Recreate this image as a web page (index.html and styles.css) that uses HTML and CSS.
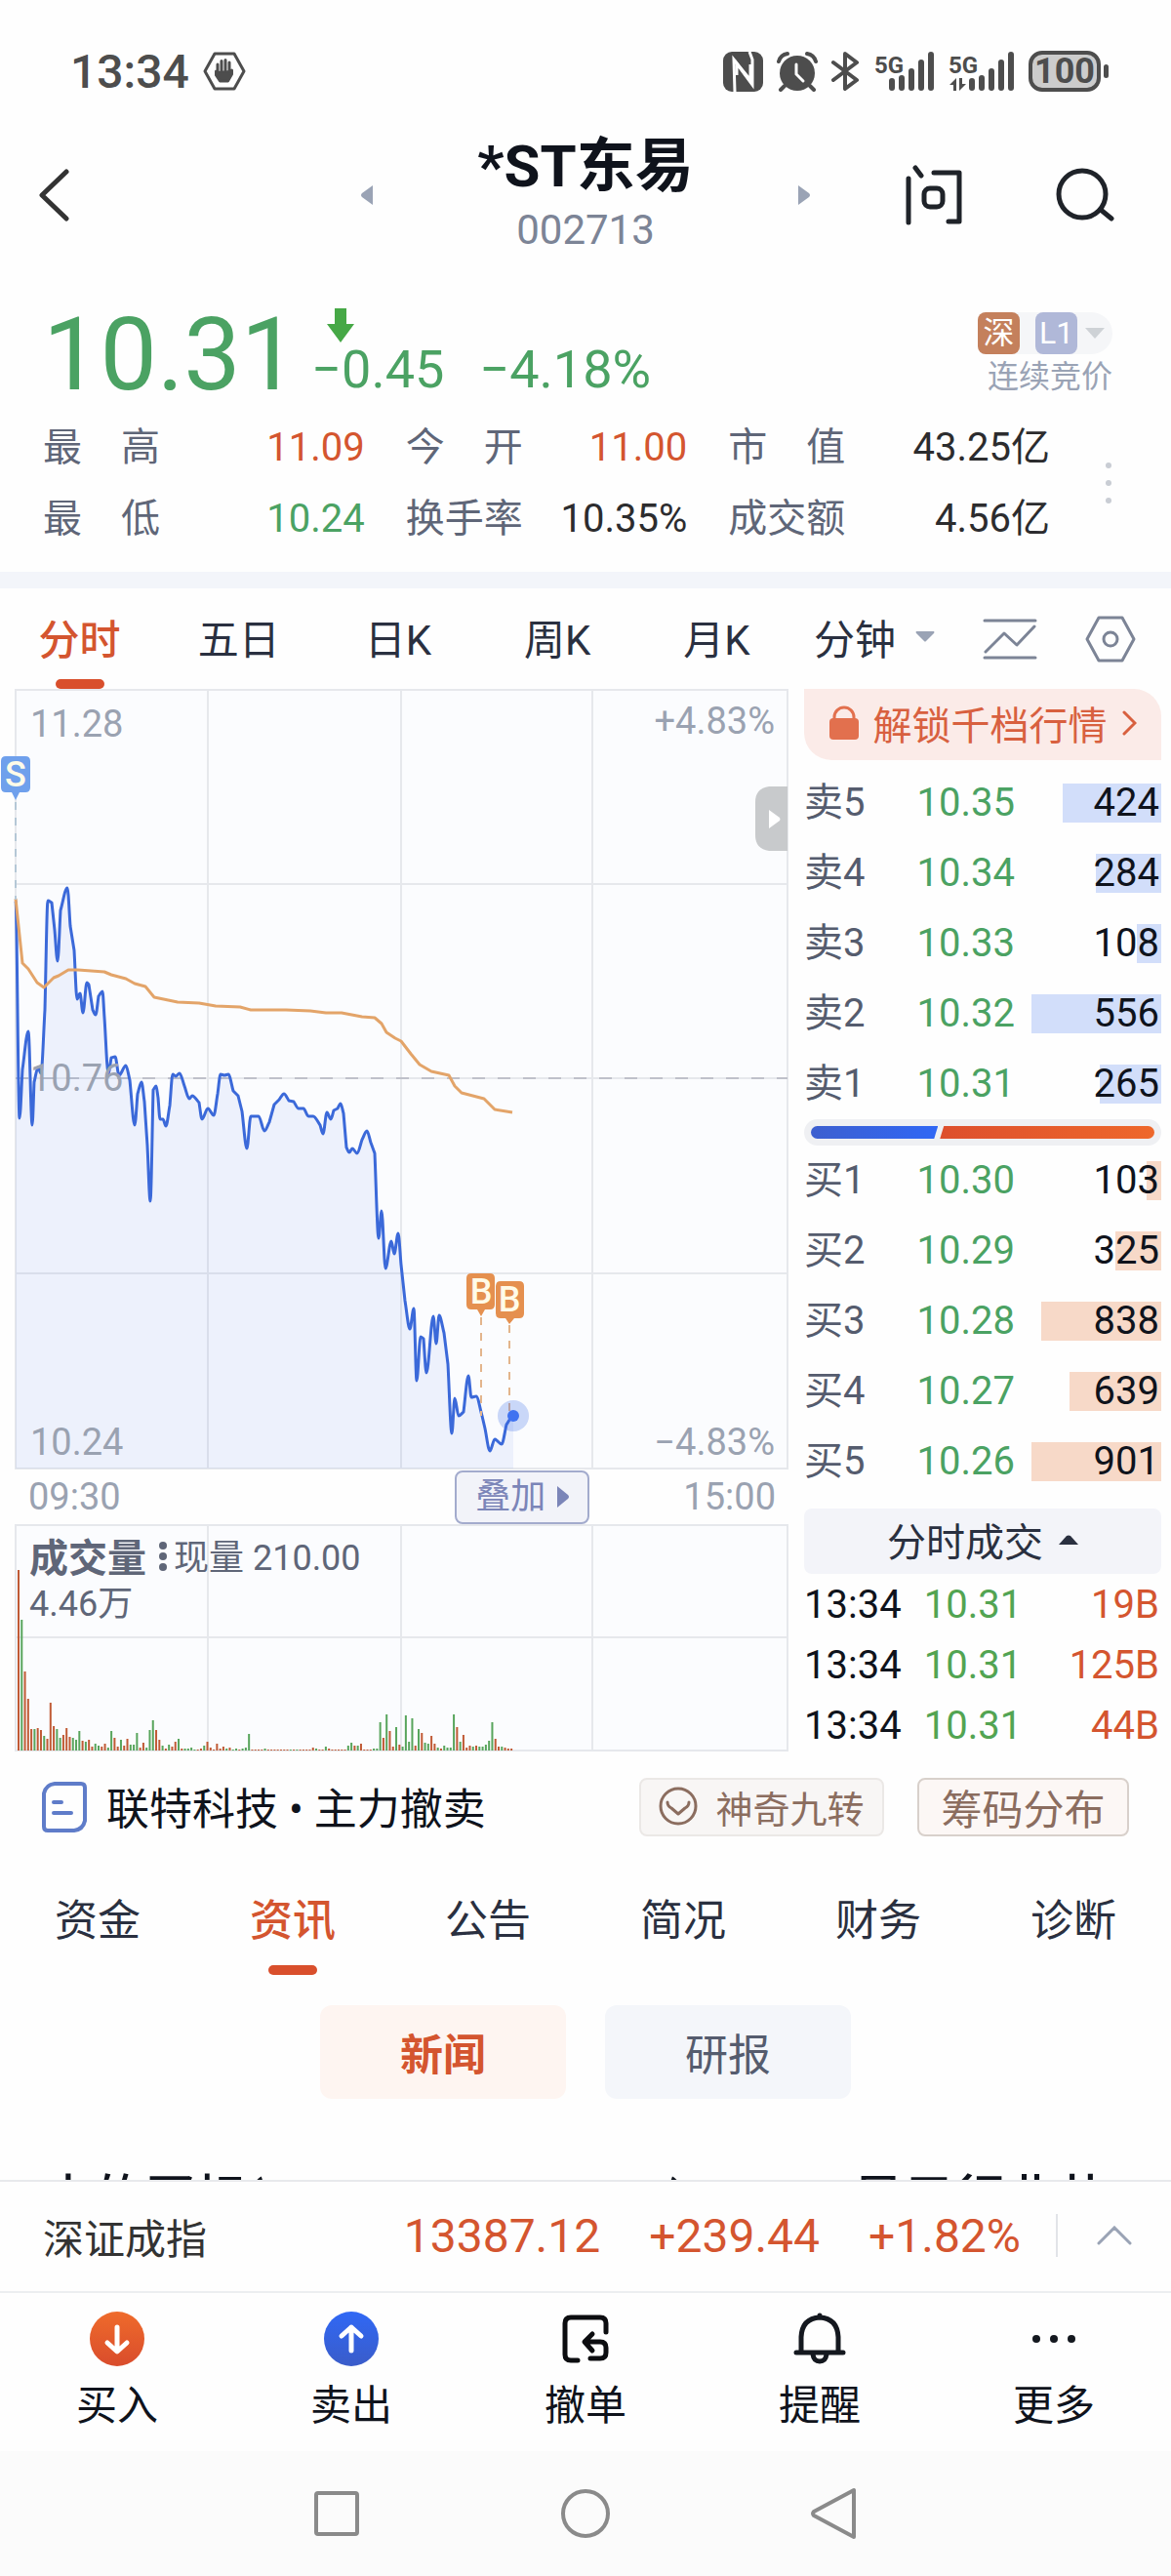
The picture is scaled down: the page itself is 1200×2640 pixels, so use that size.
FILE: index.html
```html
<!DOCTYPE html>
<html lang="zh-CN">

<head>
  <meta charset="utf-8">
  <title>*ST东易 002713</title>
  <link rel="stylesheet" href="styles.css">
</head>

<body>
  <div class="status">
    <div class="status-left">
      <span class="clock">13:34</span>
      <svg width="44" height="40" viewBox="0 0 44 40">
        <path d="M12 2h20l10 18-10 18H12L2 20z" fill="none" stroke="#4d4d4d" stroke-width="3" stroke-linejoin="round"/>
        <path d="M15 22V13M19 20V9.500M23 20V8.500M27 20V11M13.500 20v4l4 6h8l4-7v-4" fill="#4d4d4d" stroke="#4d4d4d" stroke-width="3" stroke-linecap="round" stroke-linejoin="round"/>
      </svg>
    </div>
    <div class="status-right">
      <svg width="41" height="41" viewBox="0 0 41 41">
        <rect width="41" height="41" rx="9" fill="#4d4d4d"/>
        <path d="M12 41L11 8l17 21V13" fill="none" stroke="#fff" stroke-width="3"/>
        <path d="M14 24V12l16 22V8L27 0" fill="none" stroke="#fff" stroke-width="3"/>
      </svg>
      <svg width="42" height="42" viewBox="0 0 42 42">
        <circle cx="21" cy="23" r="18" fill="#4d4d4d"/>
        <path d="M2 11Q4 4 11 3M31 3q7 1 9 8M8 36l-4 4M34 36l4 4" fill="none" stroke="#4d4d4d" stroke-width="4" stroke-linecap="round"/>
        <path d="M20 14v10l7 7" fill="none" stroke="#fff" stroke-width="3" stroke-linecap="round"/>
      </svg>
      <svg width="30" height="42" viewBox="0 0 30 42">
        <path d="M2 12l24 18-12 9V3l12 9L2 30" fill="none" stroke="#4d4d4d" stroke-width="4" stroke-linecap="round" stroke-linejoin="round"/>
      </svg>
      <svg width="62" height="42" viewBox="0 0 62 42">
        <text class="net" x="0" y="23">5G</text>
        <path d="M18 31v7M28 28v10M38 21v17M48 12v26M58 4v34" stroke="#4d4d4d" stroke-width="6" stroke-linecap="round"/>
      </svg>
      <svg width="68" height="42" viewBox="0 0 68 42">
        <text class="net" x="0" y="23">5G</text>
        <path d="M24 31v7M34 28v10M44 21v17M54 12v26M64 4v34" stroke="#4d4d4d" stroke-width="6" stroke-linecap="round"/>
        <path d="M1 35l7-7v13H5v-6zM18 34l-7 7V28h3v6z" fill="#4d4d4d"/>
      </svg>
      <span class="battery">100</span>
    </div>
  </div>

  <div class="header">
    <button class="back" aria-label="返回">
      <svg width="32" height="56" viewBox="0 0 32 56">
        <path d="M28 4L3 28l25 24" fill="none" stroke="#333" stroke-width="5" stroke-linecap="round" stroke-linejoin="round"/>
      </svg>
    </button>
    <div class="switcher">
      <button aria-label="上一只"><svg width="12" height="20"><path d="M12 0v20L1 12q-2-2 0-4z" fill="#9aa3b5"/></svg></button>
      <div class="stock">
        <h1>*ST东易</h1>
        <div class="code">002713</div>
      </div>
      <button aria-label="下一只"><svg width="12" height="20"><path d="M0 0v20l11-8q2-2 0-4z" fill="#9aa3b5"/></svg></button>
    </div>
    <div class="header-right">
      <button aria-label="问">
        <svg width="58" height="62" viewBox="0 0 58 62">
          <path d="M3 14v45M10 3l6 8M29 8h26v50H44" fill="none" stroke="#1f2329" stroke-width="5" stroke-linecap="round" stroke-linejoin="round"/>
          <rect x="19" y="24" width="19" height="19" rx="6" fill="none" stroke="#1f2329" stroke-width="5"/>
        </svg>
      </button>
      <button aria-label="搜索">
        <svg width="60" height="56" viewBox="0 0 60 56">
          <circle cx="27" cy="27" r="24" fill="none" stroke="#1f2329" stroke-width="5"/>
          <path d="M46 43l11 9" stroke="#1f2329" stroke-width="5" stroke-linecap="round"/>
        </svg>
      </button>
    </div>
  </div>

  <div class="quote">
    <div class="price-row">
      <div class="price">10.31</div>
      <div class="change">
        <svg width="28" height="36"><path d="M8 0h12v16h8L14 35 0 16h8z" fill="#46a846"/></svg>
        <div><span>−0.45</span><span>−4.18%</span></div>
      </div>
      <div class="market">
        <button class="badges"><span class="badge sz">深</span><span class="badge l1">L1</span><svg width="20" height="12"><path d="M0 0h20L10 11z" fill="#ced2d6"/></svg></button>
        <div>连续竞价</div>
      </div>
    </div>
    <div class="stats-row">
      <dl class="stats">
        <div><dt>最　高</dt><dd class="up">11.09</dd></div>
        <div><dt>今　开</dt><dd class="up">11.00</dd></div>
        <div><dt>市　值</dt><dd>43.25亿</dd></div>
        <div><dt>最　低</dt><dd class="down">10.24</dd></div>
        <div><dt>换手率</dt><dd>10.35%</dd></div>
        <div><dt>成交额</dt><dd>4.56亿</dd></div>
      </dl>
      <button aria-label="更多指标">
        <svg width="8" height="44" fill="#c9cdd4"><circle cx="4" cy="4" r="3"/><circle cx="4" cy="22" r="3"/><circle cx="4" cy="40" r="3"/></svg>
      </button>
    </div>
  </div>

  <div class="periods">
    <div class="period-tabs">
      <button class="active">分时</button>
      <button>五日</button>
      <button>日K</button>
      <button>周K</button>
      <button>月K</button>
    </div>
    <div class="period-tools">
      <button class="minutes">分钟 <svg width="20" height="11"><path d="M1 0h18q1 1 0 2l-8 8q-1 1-2 0L1 2q-1-1 0-2z" fill="#9aa3b5"/></svg></button>
      <button aria-label="画线">
        <svg width="56" height="44" viewBox="0 0 56 44" fill="none" stroke="#7c8496" stroke-width="3" stroke-linecap="round" stroke-linejoin="round">
          <path d="M2 3h52M2 41h52"/>
          <path d="M3 35l19-19 13 12 18-19"/>
        </svg>
      </button>
      <button aria-label="设置">
        <svg width="52" height="48" viewBox="0 0 52 48" fill="none" stroke="#7c8496" stroke-width="3" stroke-linejoin="round">
          <path d="M14 2h24l12 22-12 22H14L2 24z"/>
          <circle cx="26" cy="24" r="7"/>
        </svg>
      </button>
    </div>
  </div>

  <div class="board">
    <div class="charts">
      <svg class="chart" viewBox="0 0 816 800">
        <rect x="16" y="1" width="791" height="798" fill="#fbfcfe"/>
        <g class="grid">
          <path d="M16 1h791v798H16zM16 200h791M16 399h791M16 599h791M213 1v798M411 1v798M607 1v798"/>
        </g>
        <path class="mid" d="M16 399h791"/>
        <path id="area" fill="#3568e8" fill-opacity=".07"/>
        <path id="line" fill="none" stroke="#3b69d9" stroke-width="3" stroke-linejoin="round"/>
        <path fill="none" stroke="#e3a469" stroke-width="3" stroke-linejoin="round" d="M16 215L23 281L29 287L38 301L45 306L55 296L60 294L70 288L80 288L107 290L114 293L129 297L138 302L149 305L158 316L182 321L204 322L221 325L246 326L257 329L293 329L318 330L334 332L350 332L371 336L384 337L391 343L396 352L405 358L411 361L421 374L430 385L442 392L460 396L466 407L473 414L496 420L507 431L525 434"/>
        <g class="axis">
          <text x="31" y="49">11.28</text>
          <text x="794" y="46" text-anchor="end">+4.83%</text>
          <text x="31" y="412">10.76</text>
          <text x="31" y="785">10.24</text>
          <text x="794" y="785" text-anchor="end">−4.83%</text>
        </g>
        <path d="M16 116v100" stroke="#b5c8d6" stroke-width="2" stroke-dasharray="8 8"/>
        <path d="M493 644v101M522 652v88" stroke="#e3b58c" stroke-width="2" stroke-dasharray="8 8"/>
        <path d="M6 69h20q5 0 5 5v27q0 5-5 5h-6l-4 8-4-8H6q-5 0-5-5V74q0-5 5-5z" fill="#6fa0ec"/>
        <path d="M483 599h19q5 0 5 5v27q0 5-5 5h-5l-4 7-4-7h-6q-5 0-5-5v-27q0-5 5-5z" fill="#e5904f"/>
        <path d="M513 607h19q5 0 5 5v28q0 5-5 5h-5l-5 6-4-6h-5q-5 0-5-5v-28q0-5 5-5z" fill="#e5904f"/>
        <g class="mark">
          <text x="16" y="100">S</text>
          <text x="493" y="630">B</text>
          <text x="522" y="638">B</text>
        </g>
        <circle cx="526" cy="745" r="16" fill="#3568e8" fill-opacity=".25"/>
        <circle cx="526" cy="745" r="6" fill="#3f72f0"/>
        <path d="M807 100h-19q-14 2-14 16v34q0 14 14 16h19z" fill="#c8cacc"/>
        <path d="M788 124v19l11-8q1-1 0-3z" fill="#fff"/>
      </svg>
      <div class="times">
        <span>09:30</span>
        <button class="overlay">叠加 <svg width="12" height="22"><path d="M0 0v22l11-9q2-2 0-4z" fill="#7b85b8"/></svg></button>
        <span>15:00</span>
      </div>
      <svg class="chart" viewBox="0 0 816 233">
        <rect x="16" y="1" width="791" height="231" fill="#fbfcfe"/>
        <path class="grid" d="M16 1h791v231H16zM16 116h791M213 1v231M411 1v231M607 1v231"/>
        <path id="vol-up" stroke="#c05a35" stroke-width="2"/>
        <path id="vol-down" stroke="#58a55c" stroke-width="2"/>
        <g class="vol-text">
          <text class="vol-name" x="30" y="49">成交量</text>
          <text x="178" y="47">现量 210.00</text>
          <text x="30" y="94">4.46万</text>
          <circle cx="167" cy="22" r="4"/>
          <circle cx="167" cy="33" r="4"/>
          <circle cx="167" cy="44" r="4"/>
        </g>
      </svg>
    </div>

    <div class="panel">
      <button class="unlock">
        <svg width="30" height="36" viewBox="0 0 30 36">
          <rect y="13" width="30" height="22" rx="4" fill="#e2704e"/>
          <path d="M5 14v-2a10 10 0 0 1 20 0v2" fill="none" stroke="#e2704e" stroke-width="3"/>
        </svg>
        解锁千档行情
        <svg width="15" height="26" viewBox="0 0 15 26"><path d="M2 2l11 11L2 24" fill="none" stroke="#d8603f" stroke-width="3" stroke-linecap="round"/></svg>
      </button>
      <table class="orders sell">
        <tr><th>卖5</th><td class="down">10.35</td><td><i style="width:101px"></i><b>424</b></td></tr>
        <tr><th>卖4</th><td class="down">10.34</td><td><i style="width:67px"></i><b>284</b></td></tr>
        <tr><th>卖3</th><td class="down">10.33</td><td><i style="width:25px"></i><b>108</b></td></tr>
        <tr><th>卖2</th><td class="down">10.32</td><td><i style="width:133px"></i><b>556</b></td></tr>
        <tr><th>卖1</th><td class="down">10.31</td><td><i style="width:63px"></i><b>265</b></td></tr>
      </table>
      <div class="ratio"><div class="ratio-sell" style="width:37%"></div><div class="ratio-buy"></div></div>
      <table class="orders buy">
        <tr><th>买1</th><td class="down">10.30</td><td><i style="width:15px"></i><b>103</b></td></tr>
        <tr><th>买2</th><td class="down">10.29</td><td><i style="width:47px"></i><b>325</b></td></tr>
        <tr><th>买3</th><td class="down">10.28</td><td><i style="width:123px"></i><b>838</b></td></tr>
        <tr><th>买4</th><td class="down">10.27</td><td><i style="width:94px"></i><b>639</b></td></tr>
        <tr><th>买5</th><td class="down">10.26</td><td><i style="width:133px"></i><b>901</b></td></tr>
      </table>
      <button class="ticks-title">分时成交 <svg width="20" height="10"><path d="M0 10L8 1q2-1 4 0l8 9z" fill="#2a3040"/></svg></button>
      <table class="ticks">
        <tr><td>13:34</td><td class="tick-price">10.31</td><td class="up">19B</td></tr>
        <tr><td>13:34</td><td class="tick-price">10.31</td><td class="up">125B</td></tr>
        <tr><td>13:34</td><td class="tick-price">10.31</td><td class="up">44B</td></tr>
      </table>
    </div>
  </div>

  <div class="hint">
    <svg width="46" height="52" viewBox="0 0 46 52" fill="none" stroke="#5f7cc9" stroke-width="4" stroke-linecap="round">
      <path d="M13 2h27q4 0 4 4v34q-2 9-11 10H6q-4 0-4-4V12Q4 3 13 2z"/>
      <path d="M12 21h8M12 32h18"/>
    </svg>
    <span class="hint-text">联特科技 • 主力撤卖</span>
    <button class="nine">
      <svg width="40" height="40" viewBox="0 0 40 40" fill="none" stroke="#8b6d5f" stroke-width="3" stroke-linecap="round" stroke-linejoin="round">
        <circle cx="20" cy="20" r="18"/>
        <path d="M9 16q0 4 4 6l7 6 7-6q4-2 4-6"/>
      </svg>
      神奇九转
    </button>
    <button class="chips">筹码分布</button>
  </div>

  <div class="tabs">
    <button>资金</button>
    <button class="active">资讯</button>
    <button>公告</button>
    <button>简况</button>
    <button>财务</button>
    <button>诊断</button>
  </div>

  <div class="subtabs">
    <button class="active">新闻</button>
    <button>研报</button>
  </div>

  <div class="news">
    <a href="#">中的买标(2025-10-31 13:35)<span>显示行业共</span></a>
  </div>

  <div class="index">
    <span class="index-name">深证成指</span>
    <span>13387.12</span>
    <span>+239.44</span>
    <span>+1.82%</span>
    <button aria-label="展开">
      <svg width="36" height="20" viewBox="0 0 36 20"><path d="M2 18L18 2l16 16" fill="none" stroke="#9aa3b5" stroke-width="3" stroke-linecap="round"/></svg>
    </button>
  </div>

  <div class="actions">
    <button>
      <svg width="58" height="58" viewBox="0 0 58 58">
        <defs><linearGradient id="g1" x2="0" y2="1"><stop stop-color="#ef6b2b"/><stop offset="1" stop-color="#d94c2c"/></linearGradient></defs>
        <circle cx="29" cy="29" r="28" fill="url(#g1)"/>
        <path d="M29 17v24M19 33l10 9 10-9" fill="none" stroke="#fff" stroke-width="5" stroke-linecap="round" stroke-linejoin="round"/>
      </svg>
      买入
    </button>
    <button>
      <svg width="58" height="58" viewBox="0 0 58 58">
        <defs><linearGradient id="g2" x2="0" y2="1"><stop stop-color="#3068f5"/><stop offset="1" stop-color="#3a5cc9"/></linearGradient></defs>
        <circle cx="29" cy="29" r="28" fill="url(#g2)"/>
        <path d="M29 41V17M19 26l10-9 10 9" fill="none" stroke="#fff" stroke-width="5" stroke-linecap="round" stroke-linejoin="round"/>
      </svg>
      卖出
    </button>
    <button>
      <svg width="58" height="58" viewBox="0 0 58 58" fill="none" stroke="#0c0d10" stroke-width="5" stroke-linecap="round" stroke-linejoin="round">
        <path d="M50 22v-9q0-6-6-6H14q-6 0-6 6v32q0 6 6 6h7"/>
        <path d="M36 24l-8 8 8 9M29 32h15q6 0 6 6v5q0 6-6 6H34"/>
      </svg>
      撤单
    </button>
    <button>
      <svg width="58" height="58" viewBox="0 0 58 58" fill="none" stroke="#14181f" stroke-width="5" stroke-linecap="round" stroke-linejoin="round">
        <path d="M5 43h48M10 43V27Q11 8 29 7q18 1 19 20v16M29 7V5M22 45q1 7 7 7t7-7"/>
      </svg>
      提醒
    </button>
    <button>
      <svg width="58" height="58" viewBox="0 0 58 58" fill="#14181f"><circle cx="11" cy="29" r="4"/><circle cx="29" cy="29" r="4"/><circle cx="47" cy="29" r="4"/></svg>
      更多
    </button>
  </div>

  <div class="sysnav">
    <button aria-label="多任务"><svg width="54" height="54"><rect x="6" y="6" width="42" height="42" rx="2"/></svg></button>
    <button aria-label="主页"><svg width="54" height="54"><circle cx="27" cy="27" r="23"/></svg></button>
    <button aria-label="返回"><svg width="54" height="54"><path d="M47 3v48L6 29q-2-2 0-4z"/></svg></button>
  </div>

  <script src="chart.js"></script>
</body>

</html>
```
FILE: styles.css
```css
* {
  box-sizing: border-box;
}

body {
  display: flex;
  flex-direction: column;
  height: 100vh;
  margin: 0;
  font-family: Roboto, "Noto Sans CJK SC", sans-serif;
  font-size: 40px;
  color: #0f131c;
  background: #fefefe;
}

body > div {
  flex-shrink: 0;
}

button {
  padding: 0;
  border: none;
  background: none;
  font: inherit;
  color: inherit;
}

svg {
  display: block;
  flex-shrink: 0;
}

h1,
dl,
dd {
  margin: 0;
}

.up {
  color: #d4552f;
}

.down {
  color: #4ba263;
}

/* status bar */

.status {
  display: flex;
  justify-content: space-between;
  align-items: center;
  height: 120px;
  padding: 26px 72px 0 72px;
  color: #4d4d4d;
}

.status-left,
.status-right {
  display: flex;
  align-items: center;
  gap: 14px;
}

.clock {
  font-size: 48px;
  font-weight: 500;
}

.net {
  font-size: 24px;
  font-weight: 700;
  fill: #4d4d4d;
}

.battery {
  position: relative;
  width: 74px;
  height: 42px;
  border: 4px solid #4d4d4d;
  border-radius: 14px;
  background: #ccc;
  font-size: 36px;
  font-weight: 700;
  line-height: 34px;
  text-align: center;
}

.battery::after {
  content: "";
  position: absolute;
  top: 10px;
  right: -12px;
  width: 5px;
  height: 14px;
  border-radius: 3px;
  background: #4d4d4d;
}

/* header */

.header {
  display: grid;
  grid-template-columns: 1fr 39% 1fr;
  align-items: center;
  height: 160px;
}

.back {
  justify-self: start;
  padding-left: 40px;
}

.switcher {
  display: flex;
  justify-content: space-between;
  align-items: center;
  padding: 0 4px;
}

.stock {
  text-align: center;
}

h1 {
  font-size: 60px;
  font-weight: 700;
  line-height: 72px;
}

.code {
  font-size: 42px;
  line-height: 58px;
  color: #7c8496;
}

.header-right {
  display: flex;
  justify-content: flex-end;
  align-items: center;
  gap: 96px;
  padding-right: 58px;
}

/* quote */

.quote {
  padding: 34px 60px 18px 44px;
  border-bottom: 17px solid #f3f5fa;
}

.price-row {
  display: flex;
  align-items: flex-end;
}

.price {
  font-size: 104px;
  line-height: 100px;
  color: #4ba263;
}

.change {
  margin-left: 14px;
  padding-bottom: 8px;
  font-size: 54px;
  line-height: 54px;
  color: #4ba263;
}

.change svg {
  margin-left: 16px;
}

.change span {
  margin-right: 36px;
}

.market {
  align-self: flex-start;
  margin-left: auto;
  padding-top: 6px;
  font-size: 32px;
  line-height: 46px;
  color: #9aa3b5;
  text-align: right;
}

.badges {
  display: flex;
  align-items: center;
  width: 138px;
  border-radius: 8px 22px 22px 8px;
  background: #f5f6f8;
}

.badge {
  width: 43px;
  height: 43px;
  border-radius: 8px;
  color: #fff;
  line-height: 43px;
  text-align: center;
}

.sz {
  margin-right: 16px;
  background: #c4805c;
}

.l1 {
  margin-right: 8px;
  background: #b0b8d8;
}

.stats-row {
  display: flex;
  align-items: center;
  gap: 56px;
  margin-top: 8px;
}

.stats {
  flex: 1;
  display: grid;
  grid-template-columns: 8fr 7fr 8fr;
  column-gap: 42px;
}

.stats div {
  display: flex;
  justify-content: space-between;
  line-height: 73px;
}

dt {
  color: #5f6678;
}

dd {
  color: #2c2c2e;
}

dd.up {
  color: #d4552f;
}

dd.down {
  color: #4ba263;
}

/* period tabs */

.periods {
  display: flex;
  height: 103px;
  font-size: 42px;
  color: #2a3040;
}

.period-tabs {
  display: flex;
  width: 68%;
}

.period-tabs button,
.minutes {
  flex: 1;
  padding-bottom: 4px;
}

.period-tools {
  flex: 1;
  display: flex;
  justify-content: space-between;
  align-items: center;
  padding: 0 36px 0 18px;
}

.period-tools .minutes {
  flex: none;
  display: flex;
  align-items: center;
  gap: 20px;
}

.active {
  position: relative;
  font-weight: 500;
  color: #d4552f;
}

.period-tabs .active::after,
.tabs .active::after {
  content: "";
  position: absolute;
  bottom: 0;
  left: 50%;
  width: 50px;
  height: 10px;
  margin-left: -25px;
  border-radius: 5px;
  background: #d94f2c;
}

/* charts and order book */

.board {
  display: grid;
  grid-template-columns: 68% 1fr;
  align-items: start;
}

.chart {
  width: 100%;
  height: auto;
}

.grid {
  fill: none;
  stroke: #e6e8ec;
  stroke-width: 2;
}

.mid {
  stroke: #bfc1ca;
  stroke-width: 2;
  stroke-dasharray: 13 13;
}

.axis {
  font-size: 38px;
  fill: #9aa2b1;
}

.mark {
  font-size: 36px;
  font-weight: 500;
  fill: #fffbe8;
  text-anchor: middle;
}

.times {
  display: flex;
  align-items: center;
  height: 56px;
  padding: 0 21px 0 29px;
  font-size: 38px;
  color: #9aa2b1;
}

.overlay {
  display: flex;
  justify-content: center;
  align-items: center;
  gap: 12px;
  width: 138px;
  height: 55px;
  margin-left: auto;
  margin-right: 96px;
  border: 2px solid #a3abcd;
  border-radius: 8px;
  background: #f2f3f9;
  font-size: 36px;
  line-height: 48px;
  color: #7b85b8;
}

.vol-text {
  font-size: 36px;
  fill: #5f6678;
}

.vol-name {
  font-size: 40px;
  font-weight: 700;
}

.panel {
  padding: 0 10px 0 8px;
}

.unlock {
  display: flex;
  justify-content: center;
  align-items: center;
  gap: 15px;
  width: 100%;
  height: 73px;
  padding-bottom: 3px;
  margin-bottom: 8px;
  border-radius: 0 28px 0 28px;
  background: #fbebe8;
  color: #d8603f;
}

table {
  width: 100%;
  border-collapse: collapse;
  table-layout: fixed;
}

td,
th {
  padding: 0 2px 0 0;
  font-weight: 400;
  text-align: right;
}

.orders tr {
  height: 72px;
  line-height: 40px;
}

.orders th {
  width: 24%;
  text-align: left;
  color: #555c6e;
}

.orders td:nth-child(2) {
  width: 35%;
  padding: 0;
}

.orders td:nth-child(3) {
  position: relative;
}

.orders i {
  position: absolute;
  top: 16px;
  right: 0;
  height: 40px;
}

.orders b {
  position: relative;
  font-weight: 400;
}

.sell i {
  background: #d2defa;
}

.buy i {
  background: #f7d9c8;
}

.ratio {
  display: flex;
  gap: 2px;
  height: 27px;
  padding: 7px;
  border-radius: 14px;
  background: #eff0f3;
}

/* the two halves meet on a slant */
.ratio-sell {
  border-radius: 7px 0 0 7px;
  background: linear-gradient(to right, #3d5fcf, #3067f5);
  clip-path: polygon(0 0, 100% 0, calc(100% - 4px) 100%, 0 100%);
}

.ratio-buy {
  flex: 1;
  border-radius: 0 7px 7px 0;
  background: linear-gradient(to right, #dd4f2d, #ee682b);
  clip-path: polygon(4px 0, 100% 0, 100% 100%, 0 100%);
}

.ticks-title {
  display: flex;
  justify-content: center;
  align-items: center;
  gap: 16px;
  width: 100%;
  height: 67px;
  padding-bottom: 4px;
  margin-top: 12px;
  border-radius: 8px;
  background: #f3f4f9;
  color: #2a3040;
}

.ticks tr {
  height: 62px;
}

.ticks td:first-child {
  width: 28%;
  text-align: left;
}

.ticks .tick-price {
  width: 33%;
  padding: 0;
  color: #52a452;
}

/* info */

.hint {
  display: flex;
  align-items: center;
  height: 106px;
  padding: 0 43px;
}

.hint-text {
  margin-left: 20px;
  margin-right: auto;
  padding-bottom: 2px;
  font-size: 44px;
}

.nine,
.chips {
  display: flex;
  align-items: center;
  justify-content: center;
  height: 60px;
  padding-bottom: 2px;
  border: 2px solid #ebe8e6;
  border-radius: 8px;
  background: #f8f6f5;
  color: #8b6d5f;
}

.nine {
  gap: 18px;
  width: 251px;
  margin-right: 34px;
  font-size: 38px;
}

.chips {
  width: 217px;
  border-color: #d8d0cb;
  background: #fcf7f5;
  font-size: 42px;
}

.tabs {
  display: flex;
  height: 119px;
  font-size: 44px;
  color: #2a3040;
}

.tabs button {
  flex: 1;
}

.subtabs {
  display: flex;
  justify-content: center;
  gap: 40px;
  margin-top: 31px;
  font-size: 44px;
}

.subtabs button {
  width: 252px;
  height: 96px;
  border-radius: 12px;
  background: #f4f6fa;
  color: #555c6e;
}

.subtabs .active {
  background: #fef5f1;
  font-weight: 700;
  color: #d4552f;
}

body > .news {
  flex: 1 1 0;
  overflow: hidden;
  padding: 66px 66px 0 44px;
  font-size: 52px;
  font-weight: 500;
  line-height: 76px;
  white-space: nowrap;
}

.news a {
  display: flex;
  justify-content: space-between;
  color: inherit;
  text-decoration: none;
}

/* bottom bars */

.index {
  display: flex;
  align-items: center;
  gap: 50px;
  height: 116px;
  padding: 0 40px 2px 44px;
  border-top: 2px solid #e8e9ec;
  border-bottom: 2px solid #eceef0;
  font-size: 48px;
  color: #d4552f;
}

.index-name {
  margin-right: auto;
  font-size: 42px;
  color: #333;
}

.index button {
  margin-left: -14px;
  padding: 12px 0 12px 40px;
  border-left: 2px solid #e2e4e8;
}

.actions {
  display: flex;
  height: 162px;
}

.actions button {
  flex: 1;
  display: flex;
  flex-direction: column;
  align-items: center;
  gap: 12px;
  padding-top: 18px;
  font-size: 42px;
  line-height: 56px;
}

.sysnav {
  display: flex;
  justify-content: center;
  align-items: center;
  gap: 201px;
  height: 128px;
  background: #fbfbfb;
}

.sysnav svg {
  fill: none;
  stroke: #8a8a8a;
  stroke-width: 4;
  stroke-linejoin: round;
}
```
FILE: chart.js
```js
// price line, x y pairs in chart units
var prices = [
  16,217, 20,440, 23,390, 29,351, 33,447, 35,403, 39,388, 42,394, 46,329, 49,217,
  53,219, 56,247, 59,279, 62,227, 69,204, 72,243, 76,268, 79,318, 82,312, 85,332,
  89,301, 91,303, 95,329, 98,334, 101,315, 105,310, 107,337, 111,394, 114,378, 118,377,
  122,396, 129,386, 133,401, 138,447, 141,415, 145,403, 148,423, 151,468, 154,525, 157,411,
  160,407, 162,419, 164,441, 167,441, 170,448, 174,427, 177,395, 180,397, 184,394, 189,407,
  194,420, 197,417, 204,424, 207,441, 213,430, 219,437, 223,415, 226,395, 230,396, 234,395,
  239,412, 244,417, 248,433, 253,471, 257,438, 265,438, 271,453, 276,444, 281,426, 286,421,
  291,415, 296,422, 301,423, 306,430, 311,430, 316,438, 321,438, 328,447, 331,456, 335,434,
  339,441, 342,432, 346,430, 349,425, 352,435, 355,470, 358,475, 361,471, 366,476, 371,462,
  376,453, 380,465, 384,476, 388,563, 391,535, 395,594, 401,566, 404,579, 408,558, 411,590,
  415,627, 420,656, 424,635, 427,709, 431,664, 434,666, 437,701, 444,643, 447,671, 450,642,
  455,660, 459,692, 463,763, 466,727, 470,745, 475,741, 480,704, 483,726, 488,725, 494,745,
  497,758, 502,781, 507,769, 514,774, 519,754, 526,745
];

// one bar per minute, positive = up (red), negative = down (green)
var volumes = [
  185, -134, 81, 53, 22, -22, 23, 21, -15, 12, 49, 25, -22, -13, 16, 23, 14, -13, -11, -20,
  10, -9, 11, 4, -7, -5, 4, 7, -3, -20, 13, 4, -11, 5, 12, -6, -6, -18, 3, 8,
  -3, -21, -31, 21, 11, -5, 2, -6, 4, 9, -12, 2, -2, -2, -3, -1, 1, 2, -5, 9,
  3, 1, 7, 2, 4, -2, 3, -1, -2, 1, -2, -3, -17, 1, 1, 1, 1, -2, 1, 1,
  1, 1, 1, 1, 1, -1, 1, -1, 1, 1, 1, 1, 3, -2, 1, 1, -4, 2, 1, 1,
  1, 1, 1, -5, -8, 5, -5, 7, 1, 1, 1, -2, -2, -29, 13, -37, 20, 4, -24, 6,
  -4, -36, -9, -33, 5, -22, 18, -8, -7, 15, 7, -3, 2, -5, -3, -3, -37, 24, -9, 16,
  3, 5, -4, 5, -4, -4, -6, -10, -29, 12, 4, -4, 3, 2, 2
];

// curve through the points, flat at every turn so that no peak overshoots
function curve(p) {
  var d = "M" + p[0] + " " + p[1];
  for (var i = 2; i < p.length; i += 2) {
    var x0 = p[i - 2], y0 = p[i - 1], x1 = p[i], y1 = p[i + 1];
    var before = i > 2 ? y0 - p[i - 3] : 0;
    var after = i + 3 < p.length ? p[i + 3] - y1 : 0;
    var third = (x1 - x0) / 3;
    var c0 = before * (y1 - y0) > 0 ? y0 + (y1 - y0) / 3 : y0;
    var c1 = after * (y1 - y0) > 0 ? y1 - (y1 - y0) / 3 : y1;
    d += "C" + [x0 + third, c0, x1 - third, c1, x1, y1].join(" ");
  }
  return d;
}

var line = curve(prices);
document.getElementById("line").setAttribute("d", line);
document.getElementById("area").setAttribute("d", line + "V799H16Z");

var up = "";
var down = "";
volumes.forEach(function (v, i) {
  var bar = "M" + (19 + i * 3.28) + " 232v-" + Math.abs(v);
  if (v > 0) {
    up += bar;
  } else {
    down += bar;
  }
});
document.getElementById("vol-up").setAttribute("d", up);
document.getElementById("vol-down").setAttribute("d", down);
```
